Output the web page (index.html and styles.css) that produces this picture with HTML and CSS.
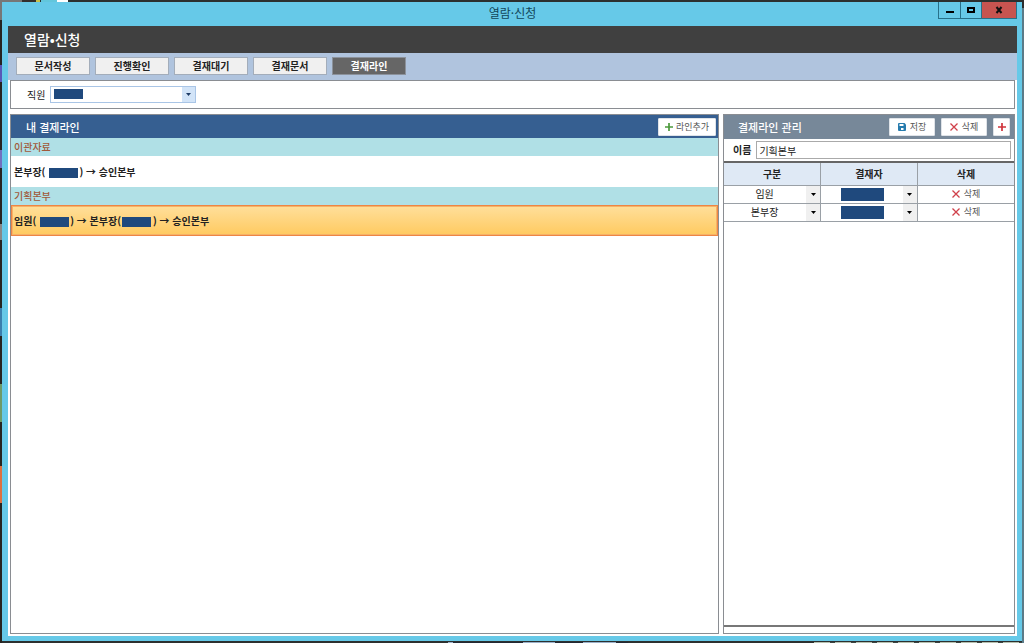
FILE: index.html
```html
<!DOCTYPE html>
<html lang="ko">
<head>
<meta charset="utf-8">
<title>열람·신청</title>
<link rel="stylesheet" href="styles.css">
</head>
<body>
<div class="window">
  <header class="titlebar">
    <span class="titlebar-text">열람·신청</span>
    <div class="window-controls">
      <button class="win-btn" type="button" aria-label="최소화"><svg width="8" height="8" viewBox="0 0 8 8"><path d="M0 5h8v2H0z"/></svg></button>
      <button class="win-btn win-max" type="button" aria-label="최대화"><svg width="8" height="8" viewBox="0 0 8 8"><path d="M0 1h8v6H0zM2 3v2h4V3z" fill-rule="evenodd"/></svg></button>
      <button class="win-btn win-close" type="button" aria-label="닫기"><svg width="8" height="8" viewBox="0 0 8 8"><path d="M1.500 1l5 6M6.500 1l-5 6" stroke="#111" stroke-width="2"/></svg></button>
    </div>
  </header>
  <main class="client">
    <h1 class="app-title">열람•신청</h1>
    <nav class="tabs">
      <button class="tab" type="button">문서작성</button>
      <button class="tab" type="button">진행확인</button>
      <button class="tab" type="button">결재대기</button>
      <button class="tab" type="button">결재문서</button>
      <button class="tab tab-active" type="button">결재라인</button>
    </nav>
    <div class="content">
      <div class="filter">
        <label for="employee">직원</label>
        <div class="combo">
          <select id="employee" class="combo-select"><option></option></select>
          <span class="mask combo-mask"></span>
          <span class="combo-arrow"><svg width="5" height="3" viewBox="0 0 5 3"><path d="M0 0h5L2.500 3z"/></svg></span>
        </div>
      </div>
      <div class="panels">
        <section class="panel">
          <div class="panel-head">
            <h2>내 결제라인</h2>
            <button class="tool tool-line" type="button"><svg width="8" height="8" viewBox="0 0 8 8"><path d="M4 0v8M0 4h8" stroke="#4c9a3c" stroke-width="1.700"/></svg>라인추가</button>
          </div>
          <h3 class="group">이관자료</h3>
          <div class="line">본부장(<span class="mask"></span>) → 승인본부</div>
          <h3 class="group">기획본부</h3>
          <div class="line line-selected">임원(<span class="mask"></span>) → 본부장(<span class="mask gap-after"></span>) → 승인본부</div>
        </section>
        <section class="panel">
          <div class="panel-head panel-head-grey">
            <h2>결제라인 관리</h2>
            <div class="tools">
              <button class="tool" type="button"><svg width="8" height="8" viewBox="0 0 8 8"><path d="M1 0h5.500L8 1.500V7a1 1 0 0 1-1 1H1a1 1 0 0 1-1-1V1a1 1 0 0 1 1-1z" fill="#277cae"/><path d="M1.500 1h4v2h-4zM3 5h2.500v2H3z" fill="#fff"/></svg>저장</button>
              <button class="tool" type="button"><svg width="8" height="8" viewBox="0 0 8 8"><path d="M.5.500l7 7M7.500.500l-7 7" stroke="#d0404a" stroke-width="1.300"/></svg>삭제</button>
              <button class="tool tool-add" type="button" aria-label="추가"><svg width="8" height="8" viewBox="0 0 8 8"><path d="M4 0v8M0 4h8" stroke="#d0333b" stroke-width="1.700"/></svg></button>
            </div>
          </div>
          <div class="name-row">
            <label for="line-name">이름</label>
            <input id="line-name" class="name-input" type="text" value="기획본부">
          </div>
          <div class="table-area">
            <table class="approvers">
              <thead><tr><th>구분</th><th>결재자</th><th>삭제</th></tr></thead>
              <tbody>
                <tr>
                  <td><div class="cell"><select class="cell-select" aria-label="구분"><option>임원</option></select><span class="cell-arrow"><svg width="5" height="3" viewBox="0 0 5 3"><path d="M0 0h5L2.500 3z"/></svg></span></div></td>
                  <td><div class="cell"><select class="cell-select" aria-label="결재자"><option></option></select><span class="mask cell-mask"></span><span class="cell-arrow"><svg width="5" height="3" viewBox="0 0 5 3"><path d="M0 0h5L2.500 3z"/></svg></span></div></td>
                  <td><button class="row-delete" type="button"><svg width="8" height="8" viewBox="0 0 8 8"><path d="M.5.500l7 7M7.500.500l-7 7" stroke="#d0404a" stroke-width="1.300"/></svg>삭제</button></td>
                </tr>
                <tr>
                  <td><div class="cell"><select class="cell-select" aria-label="구분"><option>본부장</option></select><span class="cell-arrow"><svg width="5" height="3" viewBox="0 0 5 3"><path d="M0 0h5L2.500 3z"/></svg></span></div></td>
                  <td><div class="cell"><select class="cell-select" aria-label="결재자"><option></option></select><span class="mask cell-mask"></span><span class="cell-arrow"><svg width="5" height="3" viewBox="0 0 5 3"><path d="M0 0h5L2.500 3z"/></svg></span></div></td>
                  <td><button class="row-delete" type="button"><svg width="8" height="8" viewBox="0 0 8 8"><path d="M.5.500l7 7M7.500.500l-7 7" stroke="#d0404a" stroke-width="1.300"/></svg>삭제</button></td>
                </tr>
              </tbody>
            </table>
          </div>
        </section>
      </div>
    </div>
  </main>
</div>
</body>
</html>
```
FILE: styles.css
```css
* { box-sizing: border-box; }

body {
  margin: 0;
  min-height: 100vh;
  display: flex;
  padding: 2px;
  font: 10px/16px "Noto Sans CJK KR", sans-serif;
  color: #222;
  /* desktop showing around the window's edges */
  background:
    linear-gradient(90deg, #777 0 22px, #342f2d 22px 36px, #c9c04a 36px 40px) 0 0 / 40px 2px no-repeat,
    linear-gradient(90deg, #62c6dc 0 16px, #fff 16px) 41px 0 / 27px 2px no-repeat,
    linear-gradient(#777 0 20px, #262420 20px 65px, #5858b8 65px 82px, #262420 82px 150px, #7070c0 150px 168px, #262420 168px 224px, #888 224px 240px, #262420 240px 308px, #397fae 308px 336px, #262420 336px 384px, #6d9a68 384px 422px, #262420 422px 466px, #dd7040 466px 503px, #262420 503px) 0 0 / 2px 100% no-repeat,
    linear-gradient(#2d2d2d 0 8px, #5b7b88 8px) 100% 0 / 2px 100% no-repeat,
    linear-gradient(90deg, #9ab0c8 0 5px, #222833 5px 75px, #9ab0c8 75px 107px, #222833 107px 135px, #9ab0c8 135px 168px, #222833 168px) 448px 100% / 180px 1px no-repeat,
    repeating-linear-gradient(90deg, #b5bfae 0 16px, #3b4440 16px 21px) 814px 100% / 210px 1px no-repeat,
    #2c302f;
}

button, input, select { font: inherit; color: inherit; margin: 0; }
h1, h2, h3 { margin: 0; font-weight: 700; }
svg { display: block; flex: none; }

.window {
  flex: 1;
  display: flex;
  flex-direction: column;
  padding: 0 5px 5px 6px;
  background: #66c9e8;
}

.titlebar {
  display: grid;
  grid-template-columns: 1fr auto 1fr;
  align-items: start;
  height: 24px;
}
.titlebar-text {
  grid-column: 2;
  font-size: 12px;
  line-height: 22px;
  color: #12475a;
}
.window-controls {
  justify-self: end;
  display: flex;
  border: 1px solid #28718a;
  border-top: 0;
}
.win-btn {
  display: flex;
  align-items: center;
  justify-content: center;
  width: 22px;
  height: 16px;
  padding: 0;
  border: 0;
  border-right: 1px solid #28718a;
  background: transparent;
}
.win-max { width: 21px; }
.win-close { width: 34px; border-right: 0; background: #c75450; }

.client { flex: 1; display: flex; flex-direction: column; background: #fff; }
.app-title {
  padding-left: 16px;
  font-size: 14px;
  font-weight: 500;
  line-height: 27px;
  color: #fff;
  background: #404040;
}
.tabs {
  display: flex;
  gap: 5px;
  padding: 4px 8px 5px;
  background: #b0c4de;
}
.tab {
  width: 74px;
  height: 18px;
  padding: 0;
  border: 1px solid #a3adba;
  background: #f0f0f0;
  font-weight: 700;
  line-height: 16px;
}
.tab-active { background: #666; border-color: #8c929b; color: #fff; }

.content {
  flex: 1;
  display: flex;
  flex-direction: column;
  gap: 5px;
  padding: 0 2px 2px;
}
.filter {
  display: flex;
  align-items: center;
  gap: 5px;
  height: 29px;
  padding-left: 16px;
  border: 1px solid #8a8d92;
}
.combo { position: relative; width: 146px; height: 17px; }
.combo-select {
  appearance: none;
  width: 100%;
  height: 100%;
  border: 1px solid #a9c5e6;
  border-radius: 0;
  background: #fff;
}
.combo-mask { position: absolute; left: 4px; top: 3px; }
.combo-arrow {
  position: absolute;
  top: 1px; right: 1px; bottom: 1px;
  width: 13px;
  display: flex;
  align-items: center;
  justify-content: center;
  background: #d2e4f8;
  fill: #1f3c66;
  pointer-events: none;
}
.mask { display: inline-block; width: 29px; height: 10px; background: #1f497d; vertical-align: middle; }

.panels {
  flex: 1;
  display: grid;
  grid-template-columns: 709fr 292fr;
  gap: 4px;
}
.panel {
  display: flex;
  flex-direction: column;
  min-width: 0;
  border: 1px solid #8a8d92;
}
.panel-head {
  display: flex;
  align-items: center;
  justify-content: space-between;
  height: 23px;
  padding: 0 2px 0 15px;
  background: #365f91;
  color: #fff;
}
.panel-head h2 { font-size: 11px; font-weight: 500; }
.panel-head-grey { height: 24px; padding: 0 4px 0 14px; background: #778899; }
.tools { display: flex; gap: 6px; }
.tool {
  display: flex;
  align-items: center;
  justify-content: center;
  gap: 4px;
  height: 18px;
  padding: 0;
  border: 1px solid #dfe3e8;
  border-radius: 1px;
  background: #fff;
  color: #555;
  font-size: 9px;
  line-height: 16px;
}
.tool-line { padding: 0 6px; gap: 3px; }
.tools .tool { width: 46px; }
.tools .tool-add { width: 17px; }

.group {
  padding-left: 3px;
  font-size: 10px;
  font-weight: 500;
  line-height: 18px;
  color: #a0593a;
  background: #b0e0e6;
}
.line {
  padding-left: 3px;
  font-weight: 700;
  line-height: 31px;
}
.line .mask { margin: 0 1px 0 4px; }
.line .gap-after { margin: 0 2px 0 1px; }
.line-selected {
  padding-left: 2px;
  border: 1px solid #ee8544;
  outline: 1px solid #f5b268;
  outline-offset: -2px;
  line-height: 29px;
  background: linear-gradient(#ffdf9b, #ffca60);
}

.name-row {
  display: flex;
  align-items: center;
  gap: 5px;
  height: 22px;
  padding: 0 3px 0 9px;
}
.name-row label { font-weight: 700; }
.name-input {
  flex: 1;
  min-width: 0;
  height: 18px;
  padding: 0 2px;
  border: 1px solid #aaa;
}
.table-area {
  flex: 1;
  margin-bottom: 6px;
  border-top: 2px solid #666;
  border-bottom: 2px solid #777;
}
.approvers { width: 100%; border-collapse: collapse; table-layout: fixed; }
.approvers th, .approvers td {
  padding: 0;
  border-right: 1px solid #9aa0a6;
  border-bottom: 1px solid #9aa0a6;
  text-align: center;
}
.approvers th:last-child, .approvers td:last-child { border-right: 0; }
.approvers th { height: 22px; background: #dfe9f5; font-weight: 700; }
.cell { position: relative; height: 17px; }
.cell-select {
  appearance: none;
  display: block;
  width: 100%;
  height: 100%;
  padding: 0 15px 0 0;
  border: 0;
  border-radius: 0;
  background: transparent;
  text-align: center;
  text-align-last: center;
}
.cell-mask { position: absolute; left: 20px; top: 2px; width: 43px; height: 13px; }
.cell-arrow {
  position: absolute;
  top: 0; right: 0; bottom: 0;
  width: 14px;
  display: flex;
  align-items: center;
  justify-content: center;
  background: #f0f0f0;
  pointer-events: none;
}
.row-delete {
  display: flex;
  align-items: center;
  justify-content: center;
  gap: 4px;
  width: 100%;
  height: 17px;
  padding: 0;
  border: 0;
  background: transparent;
  color: #555;
  font-size: 9px;
}
```
